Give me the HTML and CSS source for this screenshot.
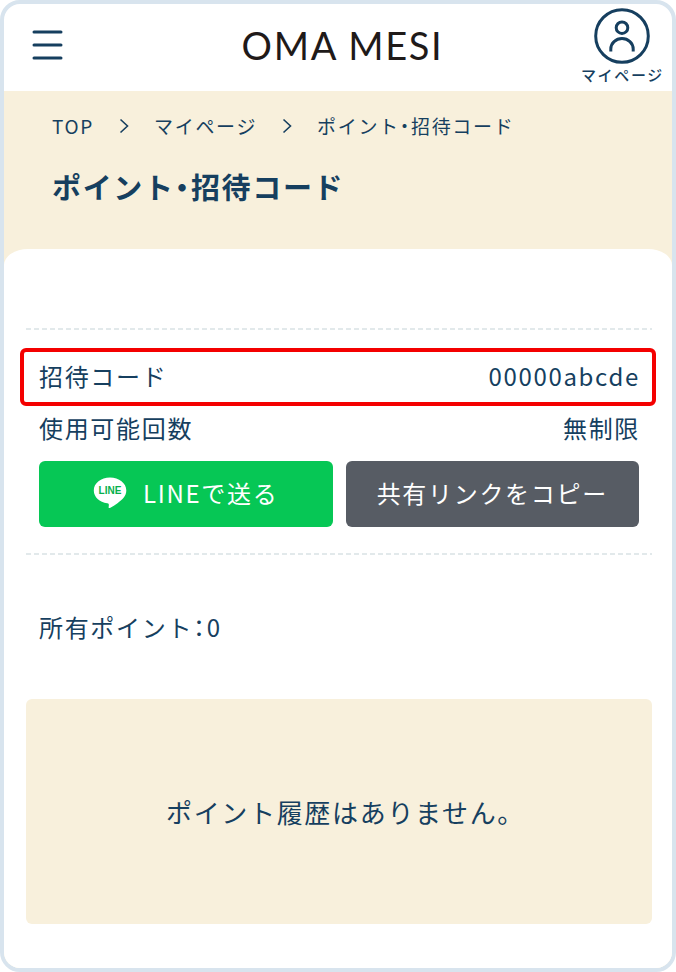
FILE: index.html
```html
<!DOCTYPE html>
<html lang="ja">
<head>
<meta charset="utf-8">
<meta name="viewport" content="width=device-width, initial-scale=1">
<title>ポイント・招待コード</title>
<link rel="stylesheet" href="styles.css">
</head>
<body>
<div class="frame">
  <header class="header">
    <button class="menu" type="button" aria-label="メニュー">
      <svg width="32" height="32" viewBox="0 0 32 32" fill="none" stroke="currentColor" stroke-width="3" stroke-linecap="round"><path d="M3 3H30M3 16H30M3 29H30"/></svg>
    </button>
    <a class="logo" href="#">OMA MESI</a>
    <a class="account" href="#">
      <svg width="56" height="56" viewBox="0 0 56 56" fill="none" stroke="currentColor" stroke-width="3"><circle cx="28" cy="28" r="26.300"/><circle cx="28" cy="19.700" r="5.800"/><path d="M16.800 43.500v-2.500a11.200 10.500 0 0 1 22.400 0v2.500"/></svg>
      <span>マイページ</span>
    </a>
  </header>
  <main class="main">
    <div class="hero">
      <nav class="crumbs" aria-label="パンくずリスト">
        <a href="#">TOP</a>
        <svg width="10" height="16" viewBox="0 0 10 16" fill="none" stroke="currentColor" stroke-width="1.600"><path d="M1.500 1.500 8.500 8l-7 6.500"/></svg>
        <a href="#">マイページ</a>
        <svg width="10" height="16" viewBox="0 0 10 16" fill="none" stroke="currentColor" stroke-width="1.600"><path d="M1.500 1.500 8.500 8l-7 6.500"/></svg>
        <span>ポイント・招待コード</span>
      </nav>
      <h1 class="title">ポイント・招待コード</h1>
    </div>
    <div class="panel">
      <section class="invite">
        <dl class="facts">
          <div class="fact fact-marked"><dt>招待コード</dt><dd>00000abcde</dd></div>
          <div class="fact"><dt>使用可能回数</dt><dd>無制限</dd></div>
        </dl>
        <div class="actions">
          <button class="button button-line" type="button">
            <svg width="34" height="32" viewBox="0 0 34 32" aria-hidden="true"><path fill="#fff" d="M17 .5C8 .5.800 6.200.800 13.400c0 6.500 5.800 11.900 13.500 12.800 1.700.3 1.800 1.200 1.400 3.200-.3 1.700.3 2.100 1.700 1.300 4.500-2.500 10.200-6.600 13-9.800 1.900-2.200 2.900-4.700 2.900-7.500C33.300 6.200 26 .5 17 .5z"/><text class="bubble" x="17" y="17" text-anchor="middle">LINE</text></svg>
            <span>LINEで送る</span>
          </button>
          <button class="button button-copy" type="button">共有リンクをコピー</button>
        </div>
      </section>
      <p class="balance">所有ポイント：0</p>
      <p class="history">ポイント履歴はありません。</p>
    </div>
  </main>
</div>
</body>
</html>
```
FILE: styles.css
```css
* {
  box-sizing: border-box;
}

body {
  margin: 0;
  background: #fff;
  color: #163f5f;
  font-family: "Noto Sans CJK JP", sans-serif;
  font-size: 24px;
  font-weight: 400;
  line-height: 36px;
  letter-spacing: 0.07em;
  font-feature-settings: "halt";
}

a {
  color: inherit;
  text-decoration: none;
}

button {
  border: 0;
  padding: 0;
  background: none;
  color: inherit;
  font: inherit;
  font-feature-settings: inherit;
  letter-spacing: inherit;
  cursor: pointer;
}

svg {
  display: block;
  flex: none;
}

.frame {
  min-height: 100vh;
  border: 4px solid #d8e4ee;
  border-radius: 20px;
  overflow: hidden;
}

.header {
  display: grid;
  grid-template-columns: 1fr auto 1fr;
  align-items: center;
  height: 87px;
  padding: 0 8px 2px 27px;
}

.menu {
  justify-self: start;
  margin-bottom: 4px;
}

.logo {
  margin: 0 10px 4px 0;
  color: #1f1a19;
  font-family: Lato, sans-serif;
  font-size: 38px;
  line-height: 48px;
}

.account {
  display: flex;
  flex-direction: column;
  align-items: center;
  justify-self: end;
  font-size: 15px;
  font-weight: 500;
  line-height: 22px;
}

.main {
  background: #f8f0dc;
}

.hero {
  display: flex;
  flex-direction: column;
  gap: 23px;
  padding: 20px 48px 41px;
}

.crumbs {
  display: flex;
  align-items: center;
  gap: 25px;
  font-size: 19px;
  line-height: 30px;
}

.title {
  margin: 0;
  font-size: 29px;
  font-weight: 700;
  line-height: 44px;
}

.panel {
  padding: 79px 20px 44px 22px;
  border-radius: 24px 24px 0 0 / 16px 16px 0 0;
  background: #fff;
}

.invite {
  padding: 20px 0 28px;
  background:
    repeating-linear-gradient(90deg, #e2e9eb 0 5px, transparent 5px 8px) top / 100% 2px no-repeat,
    repeating-linear-gradient(90deg, #e2e9eb 0 5px, transparent 5px 8px) bottom / 100% 2px no-repeat;
}

.facts {
  margin: 0 -4px 0 -6px;
}

.fact {
  display: flex;
  justify-content: space-between;
  padding: 4px 16px 8px 19px;
}

.fact-marked {
  padding: 6px 12px 8px 15px;
  border: 4px solid #f40000;
  border-radius: 6px;
}

.fact dd {
  margin: 0;
}

.actions {
  display: grid;
  grid-template-columns: 1fr 1fr;
  gap: 13px;
  padding: 7px 13px 0;
}

.button {
  display: flex;
  align-items: center;
  justify-content: center;
  gap: 16px;
  height: 66px;
  padding-bottom: 2px;
  border-radius: 6px;
  color: #fff;
}

.button-line {
  background: #06c755;
}

.button-copy {
  background: #575c64;
}

.bubble {
  fill: #06b04c;
  font-family: "Liberation Sans", sans-serif;
  font-size: 10px;
  font-weight: 700;
  letter-spacing: 0;
}

.balance {
  margin: 54px 13px;
}

.history {
  display: flex;
  align-items: center;
  justify-content: center;
  min-height: 225px;
  margin: 0;
  border-radius: 6px;
  background: #f8f0dc;
  font-size: 26px;
}
```
